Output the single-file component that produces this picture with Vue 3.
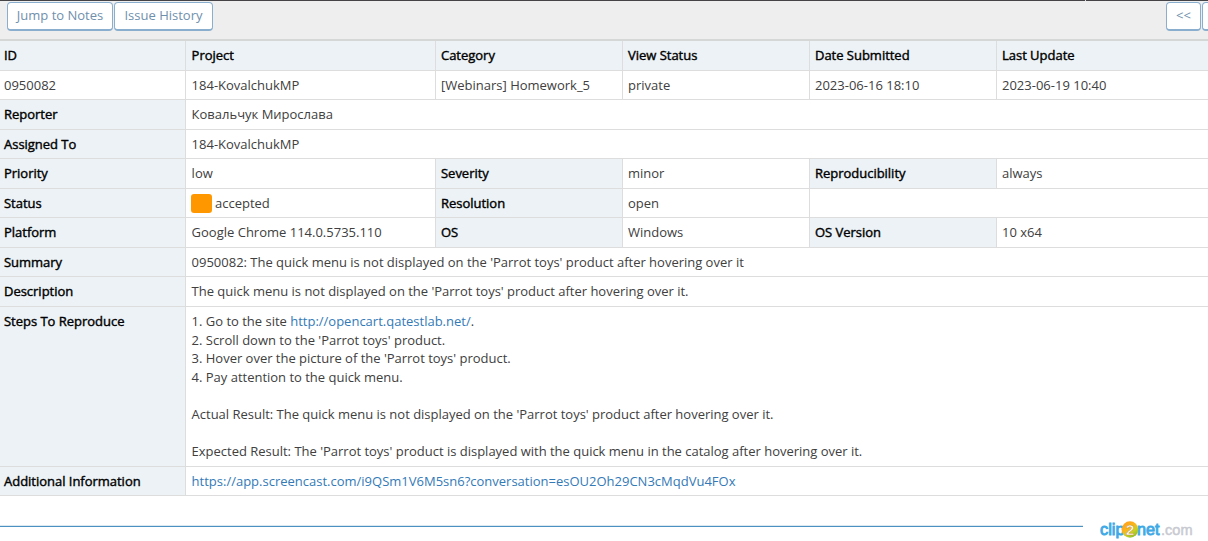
<script setup>
const rows = [
  { h: 30, cells: [['ID', 'th'], ['Project', 'th'], ['Category', 'th'], ['View Status', 'th'], ['Date Submitted', 'th'], ['Last Update', 'th']] },
  { h: 29, cells: [['0950082'], ['184-KovalchukMP'], ['[Webinars] Homework_5'], ['private'], ['2023-06-16 18:10'], ['2023-06-19 10:40']] },
  { h: 30, cells: [['Reporter', 'th'], ['Ковальчук Мирослава', 'wide']] },
  { h: 29, cells: [['Assigned To', 'th'], ['184-KovalchukMP', 'wide']] },
  { h: 30, cells: [['Priority', 'th'], ['low'], ['Severity', 'th'], ['minor'], ['Reproducibility', 'th'], ['always']] },
  { h: 29, cells: [['Status', 'th'], ['accepted', 'status'], ['Resolution', 'th'], ['open'], ['', 'pair']] },
  { h: 30, cells: [['Platform', 'th'], ['Google Chrome 114.0.5735.110'], ['OS', 'th'], ['Windows'], ['OS Version', 'th'], ['10 x64']] },
  { h: 29, cells: [['Summary', 'th'], ["0950082: The quick menu is not displayed on the 'Parrot toys' product after hovering over it", 'wide tight']] },
  { h: 30, cells: [['Description', 'th'], ["The quick menu is not displayed on the 'Parrot toys' product after hovering over it.", 'wide tight']] },
]
const steps = `2. Scroll down to the 'Parrot toys' product.
3. Hover over the picture of the 'Parrot toys' product.
4. Pay attention to the quick menu.

Actual Result: The quick menu is not displayed on the 'Parrot toys' product after hovering over it.

Expected Result: The 'Parrot toys' product is displayed with the quick menu in the catalog after hovering over it.`
</script>

<template>
  <main class="page">
    <header class="toolbar">
      <span class="btn notes">Jump to Notes</span>
      <span class="btn history">Issue History</span>
      <span class="btn prev">&lt;&lt;</span>
      <span class="btn next"></span>
    </header>
    <section class="table">
      <div v-for="(row, i) in rows" :key="i" class="row" :style="{ height: row.h + 'px' }">
        <div v-for="(cell, j) in row.cells" :key="j" class="cell" :class="cell[1]">
          <i v-if="cell[1] === 'status'" class="swatch"></i>{{ cell[0] }}
        </div>
      </div>
      <div class="row steps">
        <div class="cell th">Steps To Reproduce</div>
        <div class="cell wide text tight">1. Go to the site <a>http://opencart.qatestlab.net/</a>.<br>{{ steps }}</div>
      </div>
      <div class="row info">
        <div class="cell th">Additional Information</div>
        <div class="cell wide"><a>https://app.screencast.com/i9QSm1V6M5sn6?conversation=esOU2Oh29CN3cMqdVu4FOx</a></div>
      </div>
    </section>
    <footer class="footer">
      <div class="rule"></div>
      <svg class="logo" width="98" height="23" viewBox="0 0 98 23">
        <defs>
          <linearGradient id="ball" x1="0.15" y1="0" x2="0.85" y2="1">
            <stop offset="0" stop-color="#ff9d1c" />
            <stop offset="0.4" stop-color="#fbb51b" />
            <stop offset="0.65" stop-color="#cbd024" />
            <stop offset="1" stop-color="#73bd35" />
          </linearGradient>
        </defs>
        <text class="brand" x="1" y="13.5" textLength="24.5" lengthAdjust="spacingAndGlyphs">clip</text>
        <text class="brand" x="38" y="13.5" textLength="22.5" lengthAdjust="spacingAndGlyphs">net</text>
        <text class="domain" x="62" y="13.5" textLength="31.5" lengthAdjust="spacingAndGlyphs">.com</text>
        <circle cx="31" cy="8.5" r="8.3" fill="url(#ball)" />
        <text class="two" x="26.7" y="14">2</text>
      </svg>
    </footer>
  </main>
</template>

<style>
body { background: #fff; overflow: hidden; }
</style>

<style scoped>
.page { width: 1208px; height: 541px; overflow: hidden; background: #fff; color: #404040; font: 13px/18.57px "Open Sans", sans-serif; }
.toolbar { position: relative; box-sizing: border-box; display: flex; height: 41px; padding: 1px 0 0 7px; background: #eee; border-top: 1px solid #464346; border-bottom: 2px solid #d5d6d6; }
.toolbar::after { content: ""; position: absolute; top: -1px; left: 1085px; width: 1px; height: 1px; background: #ddd; }
.btn { box-sizing: border-box; flex: none; height: 29px; border: 1px solid #8aafce; border-bottom-width: 2px; border-radius: 4px; background: #fff; color: #6f90ad; line-height: 25px; text-align: center; white-space: nowrap; }
.notes { width: 106px; }
.history { width: 99px; margin-left: 1px; }
.prev { width: 35px; margin-left: auto; }
.next { width: 34px; margin-left: 1px; margin-right: -28px; }
.row { display: grid; grid-template-columns: 186px 250px 187px 187px 187px 211px; }
.cell { box-sizing: border-box; padding: 5px 5px 0 5px; border-right: 1px solid #ddd; border-bottom: 1px solid #ddd; white-space: nowrap; }
.cell:first-child { padding-left: 4px; }
.cell:nth-child(2) { padding-left: 5.6px; }
.cell:last-child { border-right: 0; }
.th { background: #ecf2f5; color: #000; letter-spacing: -0.02px; -webkit-text-stroke: 0.4px #000; }
.wide { grid-column: 2 / -1; }
.tight { letter-spacing: -0.01px; }
.pair { grid-column: 5 / -1; }
.status { display: flex; }
.swatch { width: 21px; height: 19px; margin: 0 3px 0 -0.6px; border-radius: 3px; background: #ff9800; }
.steps { height: 160px; }
.text { white-space: pre-line; }
.info { height: 29px; }
a { color: #337ab7; letter-spacing: 0; }
.footer { display: flex; height: 45px; }
.rule { width: 1083px; height: 1px; margin-top: 29px; border-top: 1px solid #dce8f0; background: #4b91c1; }
.logo { margin: 26px 0 0 16px; overflow: visible; margin-top: 25px; }
.brand { fill: #3fa9e6; stroke: #3fa9e6; stroke-width: 0.9px; font: 16px "Liberation Sans", sans-serif; }
.domain { fill: #c8cad1; stroke: #c8cad1; stroke-width: 0.5px; font: 15.5px "Liberation Sans", sans-serif; }
.two { fill: #fff; stroke: #c59632; stroke-width: 0.5px; font: 700 15.5px "Liberation Sans", sans-serif; }
</style>
